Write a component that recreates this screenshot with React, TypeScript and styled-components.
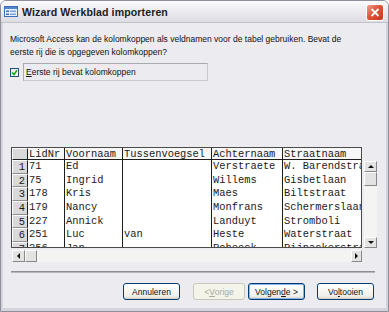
import React from "react";
import styled, { createGlobalStyle } from "styled-components";

const GlobalStyle = createGlobalStyle`
  html, body {
    margin: 0;
    padding: 0;
    overflow: hidden;
  }
  body {
    width: 389px;
    height: 312px;
    font-family: "Liberation Sans", Arial, sans-serif;
  }
`;

const Window = styled.div`
  width: 389px;
  height: 312px;
  box-sizing: border-box;
  border: 1px solid #8f8f9c;
  border-radius: 6px 6px 0 0;
  background: #ecebef;
  display: flex;
  flex-direction: column;
  overflow: hidden;
`;

const TitleBar = styled.div`
  height: 21px;
  flex: none;
  display: flex;
  align-items: center;
  padding: 0 4px 0 3px;
  background: linear-gradient(#fbfbfd 0%, #ececf1 45%, #dcdce3 100%);
  border-bottom: 1px solid #c3c3cc;
`;

const Title = styled.span`
  margin-left: 4px;
  font-size: 10.6px;
  font-weight: bold;
  color: #1c1c24;
  letter-spacing: 0.1px;
`;

const CloseButton = styled.div`
  margin-left: auto;
  width: 18px;
  height: 17px;
  box-sizing: border-box;
  border: 1px solid #fff;
  border-radius: 3px;
  background: linear-gradient(135deg, #f0a08a 0%, #e0553a 45%, #c8361e 100%);
  display: flex;
  align-items: center;
  justify-content: center;
  margin-top: 2px;
`;

const Body = styled.div`
  flex: 1;
  display: flex;
  flex-direction: column;
  padding: 10px 11px 0 9px;
  border-left: 2px solid #d3d3dc;
  border-right: 2px solid #d3d3dc;
  border-bottom: 3px solid #d3d3dc;
  margin: 0;
`;

const Intro = styled.p`
  margin: 0 0 0 -2px;
  font-size: 8.5px;
  line-height: 13px;
  color: #111;
`;

const CheckRow = styled.div`
  display: flex;
  align-items: center;
  margin-top: 4px;
  margin-left: -2px;
`;

const CheckBox = styled.div`
  width: 9px;
  height: 9px;
  box-sizing: border-box;
  border: 1px solid #1c5180;
  background: linear-gradient(135deg, #e6e6e0, #fff);
  display: flex;
  align-items: center;
  justify-content: center;
`;

const CheckLabel = styled.div`
  margin-left: 4px;
  width: 185px;
  height: 18px;
  box-sizing: border-box;
  border: 1px solid #a9a9b0;
  border-right-color: #c9c9cf;
  border-bottom-color: #c9c9cf;
  padding: 3px 0 0 2px;
  font-size: 8.5px;
  color: #111;
`;

const DataArea = styled.div`
  margin-top: 66px;
  margin-left: -1px;
  display: grid;
  grid-template-columns: 351px 15px;
  grid-template-rows: 101px 15px;
`;

const Grid = styled.div`
  display: grid;
  grid-template-columns: 16px 37px 58px 89px 71px 80px;
  grid-template-rows: 12px;
  grid-auto-rows: 13.67px;
  border: 1px solid #4a4a4a;
  background: #fff;
  overflow: hidden;
  font-family: "Liberation Mono", "Courier New", monospace;
  font-size: 10.4px;
  color: #1a1a1a;
`;

const Cell = styled.div<{ $head?: boolean }>`
  white-space: nowrap;
  overflow: hidden;
  padding-left: 1px;
  line-height: ${(p) => (p.$head ? "12px" : "13.67px")};
  border-right: 1px solid #1e1e1e;
  border-bottom: ${(p) => (p.$head ? "1px solid #1e1e1e" : "none")};
  background: ${(p) => (p.$head ? "#f7f7f7" : "#fff")};
`;

const RowHead = styled.div<{ $corner?: boolean }>`
  box-sizing: border-box;
  background: #d9d9d9;
  border-top: 1px solid #fdfdfd;
  border-left: 1px solid #fdfdfd;
  border-right: 1px solid #1e1e1e;
  border-bottom: ${(p) => (p.$corner ? "1px solid #1e1e1e" : "1px solid #8e8e8e")};
  text-align: right;
  padding-right: 2px;
  line-height: 12px;
`;

const VScroll = styled.div`
  margin: 14px 0 0 2px;
  width: 13px;
  display: flex;
  flex-direction: column;
  background: #f4f4f2;
`;

const HScroll = styled.div`
  margin: 2px 0 0 1px;
  height: 12px;
  width: 350px;
  display: flex;
  background: #f4f4f2;
`;

const Track = styled.div`
  flex: 1;
`;

const ScrollBtn = styled.div<{ $w: number; $h: number }>`
  width: ${(p) => p.$w}px;
  height: ${(p) => p.$h}px;
  box-sizing: border-box;
  background: #e3e3e3;
  border-top: 1px solid #fff;
  border-left: 1px solid #fff;
  border-right: 1px solid #888;
  border-bottom: 1px solid #888;
  display: flex;
  align-items: center;
  justify-content: center;
  flex: none;
`;

const Arrow = styled.span<{ $dir: "up" | "down" | "left" | "right" }>`
  width: 0;
  height: 0;
  border: 3px solid transparent;
  ${(p) =>
    p.$dir === "up"
      ? "border-bottom-color: #111; border-top-width: 0;"
      : p.$dir === "down"
      ? "border-top-color: #111; border-bottom-width: 0;"
      : p.$dir === "left"
      ? "border-right-color: #111; border-left-width: 0;"
      : "border-left-color: #111; border-right-width: 0;"}
`;

const Separator = styled.div`
  margin-top: 8px;
  margin-left: -1px;
  border-top: 1px solid #8e8e96;
  border-bottom: 1px solid #b8b8c0;
`;

const ButtonRow = styled.div`
  display: flex;
  justify-content: flex-end;
  margin-top: 10px;
  padding-right: 1px;
`;

const Button = styled.div<{ $disabled?: boolean; $default?: boolean; $gap: number }>`
  margin-left: ${(p) => p.$gap}px;
  width: ${(p) => (p.$disabled ? 52 : 57)}px;
  height: 17px;
  box-sizing: border-box;
  border: 1px solid ${(p) => (p.$disabled ? "#c9c7ba" : "#003c74")};
  border-radius: 3px;
  background: ${(p) =>
    p.$disabled ? "#f5f4ea" : "linear-gradient(#ffffff, #f0f0ea 80%, #d6d0c5)"};
  box-shadow: ${(p) => (p.$default ? "inset 0 0 0 1px #8cb3e8" : "none")};
  display: flex;
  align-items: center;
  justify-content: center;
  font-size: 8.5px;
  color: ${(p) => (p.$disabled ? "#a9a89c" : "#111")};
`;

const U = styled.span`
  text-decoration: underline;
`;

const cols = ["LidNr", "Voornaam", "Tussenvoegsel", "Achternaam", "Straatnaam"];

const rows = [
  ["71", "Ed", "", "Verstraete", "W. Barendstraat"],
  ["75", "Ingrid", "", "Willems", "Gisbetlaan"],
  ["178", "Kris", "", "Maes", "Biltstraat"],
  ["179", "Nancy", "", "Monfrans", "Schermerslaan"],
  ["227", "Annick", "", "Landuyt", "Stromboli"],
  ["251", "Luc", "van", "Heste", "Waterstraat"],
  ["256", "Jan", "", "Robeeck", "Pijnackerstraat"],
];

function App() {
  return (
    <Window>
      <GlobalStyle />
      <TitleBar>
        <svg width="14" height="11" viewBox="0 0 14 11">
          <rect x="0.5" y="0.5" width="13" height="10" fill="#e8f0fb" stroke="#3a6fb8" />
          <rect x="1" y="1" width="12" height="2" fill="#4f86d0" />
          <rect x="2" y="4.5" width="3" height="1.5" fill="#3a6fb8" />
          <rect x="6" y="4.5" width="6" height="1.5" fill="#7aa3dc" />
          <rect x="2" y="7.5" width="3" height="1.5" fill="#3a6fb8" />
          <rect x="6" y="7.5" width="6" height="1.5" fill="#7aa3dc" />
        </svg>
        <Title>Wizard Werkblad importeren</Title>
        <CloseButton>
          <svg width="10" height="9" viewBox="0 0 10 9">
            <path d="M1.5 1 L8.5 8 M8.5 1 L1.5 8" stroke="#fff" strokeWidth="1.8" />
          </svg>
        </CloseButton>
      </TitleBar>
      <Body>
        <Intro>
          Microsoft Access kan de kolomkoppen als veldnamen voor de tabel gebruiken. Bevat de
          <br />
          eerste rij die is opgegeven kolomkoppen?
        </Intro>
        <CheckRow>
          <CheckBox>
            <svg width="7" height="7" viewBox="0 0 7 7">
              <path d="M1 3.5 L3 5.5 L6 1.2" stroke="#21a121" strokeWidth="1.5" fill="none" />
            </svg>
          </CheckBox>
          <CheckLabel>
            <U>E</U>erste rij bevat kolomkoppen
          </CheckLabel>
        </CheckRow>
        <DataArea>
          <Grid>
            <RowHead $corner />
            {cols.map((c) => (
              <Cell $head key={c}>
                {c}
              </Cell>
            ))}
            {rows.map((r, i) => (
              <React.Fragment key={i}>
                <RowHead>{i + 1}</RowHead>
                {r.map((v, j) => (
                  <Cell key={j}>{v}</Cell>
                ))}
              </React.Fragment>
            ))}
          </Grid>
          <VScroll>
            <ScrollBtn $w={13} $h={11}>
              <Arrow $dir="up" />
            </ScrollBtn>
            <ScrollBtn $w={13} $h={14} />
            <Track />
            <ScrollBtn $w={13} $h={11}>
              <Arrow $dir="down" />
            </ScrollBtn>
          </VScroll>
          <HScroll>
            <ScrollBtn $w={13} $h={12}>
              <Arrow $dir="left" />
            </ScrollBtn>
            <ScrollBtn $w={12} $h={12} />
            <Track />
            <ScrollBtn $w={11} $h={12}>
              <Arrow $dir="right" />
            </ScrollBtn>
          </HScroll>
        </DataArea>
        <Separator />
        <ButtonRow>
          <Button $gap={0}>Annuleren</Button>
          <Button $gap={13} $disabled>
            &lt; <U>V</U>orige
          </Button>
          <Button $gap={3} $default>
            Volgen<U>d</U>e &gt;
          </Button>
          <Button $gap={12}>
            Vo<U>l</U>tooien
          </Button>
        </ButtonRow>
      </Body>
    </Window>
  );
}

export default App;
